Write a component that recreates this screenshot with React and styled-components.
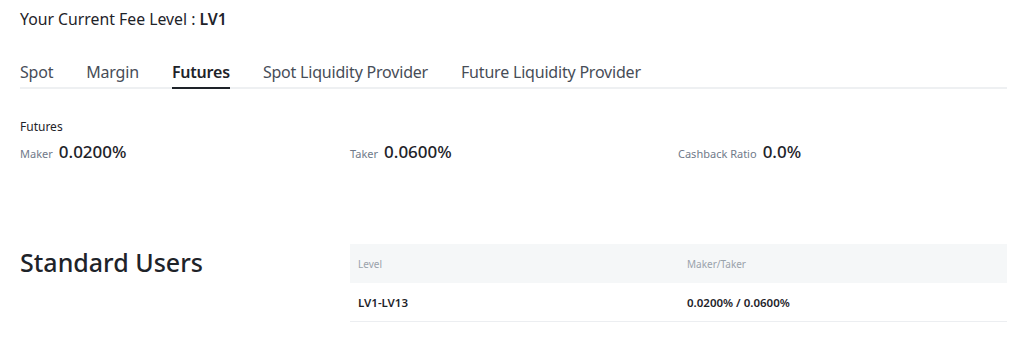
import React from "react";
import styled, { createGlobalStyle } from "styled-components";

const Global = createGlobalStyle`
  html, body { margin: 0; padding: 0; background: #fff; }
  body { font-family: "Noto Sans", "Open Sans", sans-serif; color: #1e2329; }
`;

const Page = styled.div`
  padding: 9px 17px 0 20px;
`;

const Title = styled.div`
  font-size: 15.8px;
  line-height: 20px;
  color: #1e2329;
  b { font-weight: 600; }
`;

const Tabs = styled.div`
  display: flex;
  gap: 33px;
  margin-top: 31px;
  border-bottom: 2px solid #eef0f2;
`;

const Tab = styled.div`
  font-size: 16px;
  line-height: 24px;
  letter-spacing: -0.2px;
  padding-bottom: 3px;
  margin-bottom: -2px;
  color: ${(p) => (p.$active ? "#1e2329" : "#474d57")};
  font-weight: ${(p) => (p.$active ? 600 : 400)};
  border-bottom: 2px solid ${(p) => (p.$active ? "#1e2329" : "transparent")};
`;

const SectionLabel = styled.div`
  margin-top: 30px;
  font-size: 12px;
  line-height: 16px;
  color: #1e2329;
`;

const Stats = styled.div`
  display: grid;
  grid-template-columns: 330px 328px 1fr;
  margin-top: 6px;
`;

const Stat = styled.div`
  display: flex;
  align-items: baseline;
  gap: 6px;
  line-height: 22px;
`;

const StatLabel = styled.span`
  font-size: 11px;
  color: #707a8a;
`;

const StatValue = styled.span`
  font-size: 17px;
  font-weight: 500;
  color: #1e2329;
`;

const Standard = styled.div`
  display: grid;
  grid-template-columns: 330px 1fr;
  align-items: start;
  margin-top: 79px;
`;

const Heading = styled.h2`
  margin: 0;
  font-size: 25px;
  line-height: 36px;
  font-weight: 500;
  color: #1e2329;
`;

const Table = styled.div`
  display: flex;
  flex-direction: column;
`;

const Row = styled.div`
  display: grid;
  grid-template-columns: 329px 1fr;
  height: ${(p) => (p.$head ? "39px" : "38px")};
  align-items: center;
  padding-left: 8px;
  background: ${(p) => (p.$head ? "#f5f7f8" : "#fff")};
  border-bottom: ${(p) => (p.$head ? "none" : "1px solid #eceef1")};
  font-size: ${(p) => (p.$head ? "10px" : "11.5px")};
  font-weight: ${(p) => (p.$head ? 400 : 600)};
  color: ${(p) => (p.$head ? "#9aa2ab" : "#1e2329")};
`;

export default function App() {
  const tabs = ["Spot", "Margin", "Futures", "Spot Liquidity Provider", "Future Liquidity Provider"];
  return (
    <Page>
      <Global />
      <Title>
        Your Current Fee Level : <b>LV1</b>
      </Title>
      <Tabs>
        {tabs.map((t) => (
          <Tab key={t} $active={t === "Futures"}>
            {t}
          </Tab>
        ))}
      </Tabs>
      <SectionLabel>Futures</SectionLabel>
      <Stats>
        <Stat>
          <StatLabel>Maker</StatLabel>
          <StatValue>0.0200%</StatValue>
        </Stat>
        <Stat>
          <StatLabel>Taker</StatLabel>
          <StatValue>0.0600%</StatValue>
        </Stat>
        <Stat>
          <StatLabel>Cashback Ratio</StatLabel>
          <StatValue>0.0%</StatValue>
        </Stat>
      </Stats>
      <Standard>
        <Heading>Standard Users</Heading>
        <Table>
          <Row $head>
            <span>Level</span>
            <span>Maker/Taker</span>
          </Row>
          <Row>
            <span>LV1-LV13</span>
            <span>0.0200% / 0.0600%</span>
          </Row>
        </Table>
      </Standard>
    </Page>
  );
}
